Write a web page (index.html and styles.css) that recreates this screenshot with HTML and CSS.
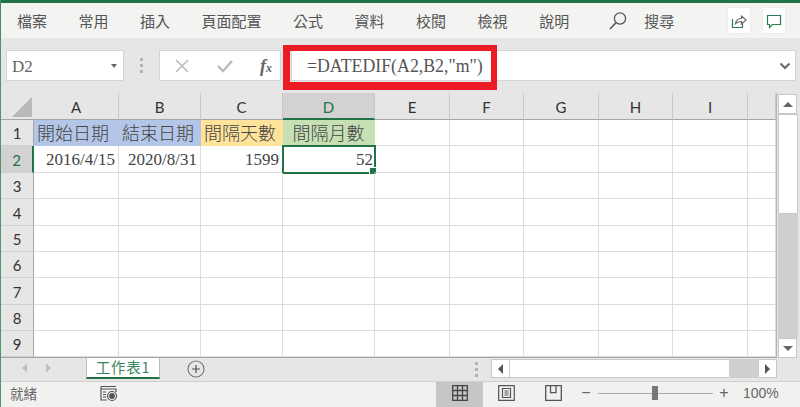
FILE: index.html
```html
<!DOCTYPE html>
<html lang="zh-Hant">
<head>
<meta charset="utf-8">
<title>Excel</title>
<link rel="stylesheet" href="styles.css">
</head>
<body>
<div class="app">
  <header class="ribbon">
    <nav class="tabs">
      <span>檔案</span><span>常用</span><span>插入</span><span>頁面配置</span><span>公式</span><span>資料</span><span>校閱</span><span>檢視</span><span>說明</span>
    </nav>
    <div class="search">
      <svg width="20" height="20" viewBox="0 0 20 20" fill="none" stroke="#555" stroke-width="1.3"><circle cx="12" cy="7.5" r="5.6"/><path d="M8 11.7 2 18" stroke-width="1.6"/></svg>
      <span>搜尋</span>
    </div>
    <div class="ribbon-actions">
      <button class="action"><svg width="16" height="16" viewBox="0 0 16 16" fill="none" stroke="#2a7d50" stroke-width="1.2"><path d="M1.5 6v8.5h10V10"/><path d="M4.5 10.5C5 7 7.500 5.500 10.500 5.500V3l4.500 4-4.500 4V8.500C8 8.500 6 9 4.500 10.500Z" stroke="#666" fill="#fff"/></svg></button>
      <button class="action"><svg width="16" height="16" viewBox="0 0 16 16" fill="none" stroke="#2a7d50" stroke-width="1.200"><path d="M1.500 2.500h13v9H6.500l-3 3v-3h-2Z"/></svg></button>
    </div>
  </header>

  <section class="formula-bar">
    <div class="name-box"><span>D2</span><i class="caret"></i></div>
    <div class="grip"><b></b><b></b><b></b></div>
    <div class="fx-box">
      <svg width="16" height="16" viewBox="0 0 16 16" fill="none" stroke="#bbb" stroke-width="1.600"><path d="M2 2l12 12M14 2 2 14"/></svg>
      <svg width="18" height="16" viewBox="0 0 18 16" fill="none" stroke="#bbb" stroke-width="2.400"><path d="M2 8l5 5 9-10"/></svg>
      <span class="fx">f<sub>x</sub></span>
    </div>
    <div class="formula-input"><span>=DATEDIF(A2,B2,"m")</span><svg class="expand" width="12" height="8" viewBox="0 0 12 8" fill="none" stroke="#666" stroke-width="2"><path d="M1.500 1.500 6 6l4.500-4.500"/></svg></div>
    <div class="highlight"></div>
  </section>

  <section class="sheet-area">
    <div class="grid">
      <div class="corner"><i></i></div>
      <div class="ch">A</div><div class="ch">B</div><div class="ch">C</div><div class="ch active">D</div><div class="ch">E</div><div class="ch">F</div><div class="ch">G</div><div class="ch">H</div><div class="ch">I</div><div class="ch"></div>

      <div class="rh">1</div>
      <div class="c head blue">開始日期</div><div class="c head blue">結束日期</div><div class="c head yellow">間隔天數</div><div class="c head green center">間隔月數</div><div class="c"></div><div class="c"></div><div class="c"></div><div class="c"></div><div class="c"></div><div class="c"></div>

      <div class="rh active">2</div>
      <div class="c num">2016/4/15</div><div class="c num">2020/8/31</div><div class="c num">1599</div><div class="c num selected">52</div><div class="c"></div><div class="c"></div><div class="c"></div><div class="c"></div><div class="c"></div><div class="c"></div>

      <div class="rh">3</div><div class="c"></div><div class="c"></div><div class="c"></div><div class="c"></div><div class="c"></div><div class="c"></div><div class="c"></div><div class="c"></div><div class="c"></div><div class="c"></div>
      <div class="rh">4</div><div class="c"></div><div class="c"></div><div class="c"></div><div class="c"></div><div class="c"></div><div class="c"></div><div class="c"></div><div class="c"></div><div class="c"></div><div class="c"></div>
      <div class="rh">5</div><div class="c"></div><div class="c"></div><div class="c"></div><div class="c"></div><div class="c"></div><div class="c"></div><div class="c"></div><div class="c"></div><div class="c"></div><div class="c"></div>
      <div class="rh">6</div><div class="c"></div><div class="c"></div><div class="c"></div><div class="c"></div><div class="c"></div><div class="c"></div><div class="c"></div><div class="c"></div><div class="c"></div><div class="c"></div>
      <div class="rh">7</div><div class="c"></div><div class="c"></div><div class="c"></div><div class="c"></div><div class="c"></div><div class="c"></div><div class="c"></div><div class="c"></div><div class="c"></div><div class="c"></div>
      <div class="rh">8</div><div class="c"></div><div class="c"></div><div class="c"></div><div class="c"></div><div class="c"></div><div class="c"></div><div class="c"></div><div class="c"></div><div class="c"></div><div class="c"></div>
      <div class="rh">9</div><div class="c"></div><div class="c"></div><div class="c"></div><div class="c"></div><div class="c"></div><div class="c"></div><div class="c"></div><div class="c"></div><div class="c"></div><div class="c"></div>
    </div>
    <aside class="vscroll">
      <div class="sbtn"><i class="tri up"></i></div>
      <div class="vthumb"></div>
      <div class="vtrack"></div>
      <div class="sbtn"><i class="tri down"></i></div>
    </aside>
  </section>

  <section class="sheet-bar">
    <div class="sheet-nav"><i class="tri left pale"></i><i class="tri right pale"></i></div>
    <div class="sheet-tab">工作表1</div>
    <div class="add-sheet"><svg width="18" height="18" viewBox="0 0 18 18" fill="none" stroke="#777" stroke-width="1.200"><circle cx="9" cy="9" r="8"/><path d="M9 5v8M5 9h8" stroke="#555"/></svg></div>
    <div class="split-grip"><b></b><b></b><b></b></div>
    <div class="hscroll">
      <div class="sbtn h"><i class="tri left"></i></div>
      <div class="hthumb"></div>
      <div class="htrack"></div>
      <div class="sbtn h"><i class="tri right"></i></div>
    </div>
  </section>

  <footer class="status">
    <span class="ready">就緒</span>
    <svg class="macro" width="18" height="17" viewBox="0 0 18 17" fill="none" stroke="#555" stroke-width="1.200"><path d="M1 1.500h15M1 4h15v3M1 1.500V15h6"/><path d="M3 7h3M3 9.500h3M3 12h3"/><circle cx="12" cy="11" r="4.500" fill="#f1f1f1"/><circle cx="12" cy="11" r="2.300" fill="#555"/></svg>
    <div class="views">
      <div class="view on"><svg width="16" height="16" viewBox="0 0 16 16" fill="none" stroke="#444" stroke-width="1.300"><path d="M.7.700h14.600v14.600H.7ZM.7 5.500h14.600M.7 10.500h14.600M5.500.7v14.600M10.500.7v14.600"/></svg></div>
      <div class="view"><svg width="17" height="16" viewBox="0 0 17 16" fill="none" stroke="#555" stroke-width="1.200"><path d="M.7.700h15.600v14.600H.7Z"/><path d="M4.500 3.500h8v9h-8ZM6.500 6h4M6.500 8h4M6.500 10h4"/></svg></div>
      <div class="view"><svg width="17" height="16" viewBox="0 0 17 16" fill="none" stroke="#555" stroke-width="1.300"><path d="M.7.700h15.600v14.600H.7ZM5.500.7v7h5.500V.7"/></svg></div>
    </div>
    <div class="zoom">
      <span class="zbtn">−</span>
      <div class="slider"><i></i></div>
      <span class="zbtn">+</span>
      <span class="pct">100%</span>
    </div>
  </footer>
</div>
</body>
</html>
```
FILE: styles.css
```css
* { box-sizing: border-box; }
html, body { margin: 0; padding: 0; }
body { width: 800px; height: 407px; overflow: hidden; background: #e6e6e6; font-family: "Noto Sans CJK TC", "Liberation Sans", sans-serif; }
.app { width: 800px; height: 407px; display: flex; flex-direction: column; border-left: 1px solid #4f9470; }

.ribbon { height: 38px; flex: none; display: flex; align-items: center; background: #f3f3f2; border-top: 3px solid #217346; box-shadow: 0 1px 4px rgba(0,0,0,.18); position: relative; padding-left: 16px; color: #555; font-size: 15px; }
.tabs { display: flex; gap: 31.5px; line-height: 20px; }
.search { display: flex; align-items: center; margin-left: 39px; gap: 16px; }
.ribbon-actions { margin-left: auto; display: flex; gap: 11px; padding-right: 14px; }
.action { width: 24px; height: 27px; padding: 0; border: 1px solid #ececec; border-radius: 2px; background: #fff; display: flex; align-items: center; justify-content: center; }

.formula-bar { height: 55px; flex: none; display: flex; align-items: center; padding: 0 4px 0 5px; background: #e6e6e6; position: relative; }
.name-box { width: 118px; height: 31px; background: #fff; border: 1px solid #d4d4d4; display: flex; align-items: center; justify-content: space-between; padding: 2px 6px 0 5px; font-family: "Liberation Serif", serif; font-size: 17px; color: #666; }
.caret { border: 3.500px solid transparent; border-top: 4px solid #666; border-bottom: 0; margin-top: -2px; }
.grip { width: 35px; display: flex; flex-direction: column; align-items: center; gap: 3px; }
.grip b, .split-grip b { width: 3px; height: 3px; background: #b4b4b4; display: block; }
.fx-box { width: 122px; height: 31px; background: #fff; border: 1px solid #d4d4d4; display: flex; align-items: center; padding: 0 8px 0 14px; justify-content: space-between; }
.fx { font-family: "Liberation Serif", serif; font-style: italic; font-weight: 700; font-size: 18px; color: #666; line-height: 1; }
.fx sub { font-size: 12px; vertical-align: baseline; }
.formula-input { margin-left: 10px; flex: 1; height: 31px; background: #fff; border: 1px solid #d4d4d4; display: flex; align-items: center; justify-content: space-between; padding: 2px 4px 0 15px; font-family: "Liberation Serif", serif; font-size: 17.800px; color: #555; }
.expand { margin-top: -2px; }
.highlight { position: absolute; left: 282px; top: 7px; width: 214px; height: 45px; border: solid #ed1c24; border-width: 6px 6px 8px 7px; }

.sheet-area { height: 265px; flex: none; display: flex; background: #e6e6e6; }
.grid { width: 776px; height: 265px; display: grid; grid-template-columns: 33px 85px 82px 82px 92px 75px 74px 75px 74px 75px 28px; grid-template-rows: 27px 26px 27px 26px 27px 26px 26px 27px 26px 26px; background: #fff; border-bottom: 1px solid #a6a6a6; border-right: 1px solid #b4b4b4; font-family: "Liberation Serif", "Noto Sans CJK TC", serif; color: #444; }
.corner { background: #e6e6e6; border-bottom: 1px solid #a6a6a6; position: relative; }
.corner i { position: absolute; right: 2px; bottom: 2px; width: 20px; height: 20px; background: #b8b8b8; clip-path: polygon(100% 0, 100% 100%, 0 100%); }
.ch { background: #e6e6e6; border-bottom: 1px solid #a6a6a6; border-right: 1px solid #c8c8c8; display: flex; align-items: center; justify-content: center; font-family: Lato, sans-serif; font-size: 15px; color: #333; padding-top: 2px; }
.ch.active { background: #d2d2d2; border-bottom: 2px solid #217346; color: #217346; }
.rh { background: #e6e6e6; border-bottom: 1px solid #d0d0d0; border-right: 1px solid #a6a6a6; display: flex; align-items: center; justify-content: center; font-family: Lato, sans-serif; font-size: 15px; color: #333; padding-top: 1px; }
.rh.active { background: #d2d2d2; border-right: 2px solid #217346; color: #217346; }
.c { border-right: 1px solid #dcdcdc; border-bottom: 1px solid #dcdcdc; font-size: 17px; line-height: 27px; white-space: nowrap; overflow: visible; position: relative; }
.c.head { font-family: "Noto Sans CJK TC", serif; font-size: 18px; font-weight: 300; padding-left: 3px; border-color: transparent; line-height: 24px; color: #444; }
.c.blue { background: #b4c6e7; }
.c.yellow { background: #ffe39b; padding-left: 3px; }
.c.green { background: #c6e0b4; }
.c.center { text-align: center; padding-left: 0; }
.c.num { text-align: right; padding-right: 3px; }
.c.selected { outline: 2px solid #217346; outline-offset: -1px; padding-right: 1px; }
.c.selected::after { content: ""; position: absolute; right: -3px; bottom: -3px; width: 6px; height: 6px; background: #217346; border: 1px solid #fff; }

.vscroll { flex: 1; display: flex; flex-direction: column; padding: 1px 2px 0 1px; }
.sbtn { width: 19px; height: 20px; flex: none; background: #fff; border: 1px solid #c8c8c8; display: flex; align-items: center; justify-content: center; }
.sbtn.h { height: 19px; }
.vthumb { height: 100px; flex: none; background: #fff; border: 1px solid #c8c8c8; }
.vtrack { flex: 1; background: #cfcfcf; }
.tri { display: block; width: 0; height: 0; border: 5px solid transparent; }
.tri.up { border-top: 0; border-bottom: 5px solid #666; margin: 0 auto; }
.tri.down { border-bottom: 0; border-top: 5px solid #666; }
.tri.left { border-left: 0; border-right: 5px solid #555; }
.tri.right { border-right: 0; border-left: 5px solid #555; }
.tri.left.pale { border-right-color: #c0c0c0; }
.tri.right.pale { border-left-color: #c0c0c0; }

.sheet-bar { height: 23px; flex: none; display: flex; align-items: flex-start; background: #e6e6e6; }
.sheet-nav { width: 85px; height: 20px; display: flex; align-items: center; gap: 19px; padding-left: 21px; }
.sheet-tab { width: 74px; height: 21px; background: #fff; border-bottom: 2px solid #217346; border-left: 1px solid #bdbdbd; border-right: 1px solid #bdbdbd; color: #3a8560; font-size: 14.500px; line-height: 18px; text-align: center; letter-spacing: .8px; }
.add-sheet { margin: 1px 0 0 27px; width: 18px; height: 18px; }
.split-grip { margin: 4px 0 0 270px; display: flex; flex-direction: column; gap: 3px; width: 3px; }
.hscroll { margin: 1px 0 0 13px; display: flex; height: 19px; width: 286px; }
.hthumb { width: 219px; background: #fff; border-top: 1px solid #c8c8c8; border-bottom: 1px solid #c8c8c8; }
.htrack { flex: 1; background: #cfcfcf; }

.status { flex: 1; display: flex; align-items: center; background: #f1f1f0; border-top: 1px solid #d0d0d0; color: #666; font-size: 13.500px; padding-left: 9px; }
.ready { width: 90px; margin-bottom: 3px; }
.macro { flex: none; margin-bottom: 3px; }
.views { display: flex; margin-left: 318px; height: 100%; }
.view { width: 47px; display: flex; align-items: center; justify-content: center; padding-bottom: 3px; }
.view.on { background: #c6c6c6; }
.zoom { display: flex; align-items: center; margin-left: 4px; margin-bottom: 3px; color: #666; }
.zbtn { width: 10px; text-align: center; font-size: 16px; line-height: 20px; font-family: "Liberation Sans", sans-serif; }
.slider { width: 115px; height: 9px; margin: 0 6px 0 7px; position: relative; background: linear-gradient(#aaa, #aaa) center / 100% 1px no-repeat; }
.slider i { position: absolute; left: 54px; top: -3px; width: 6px; height: 14px; background: #777; }
.pct { margin-left: 14px; font-family: "Liberation Sans", sans-serif; font-size: 14px; }
```
